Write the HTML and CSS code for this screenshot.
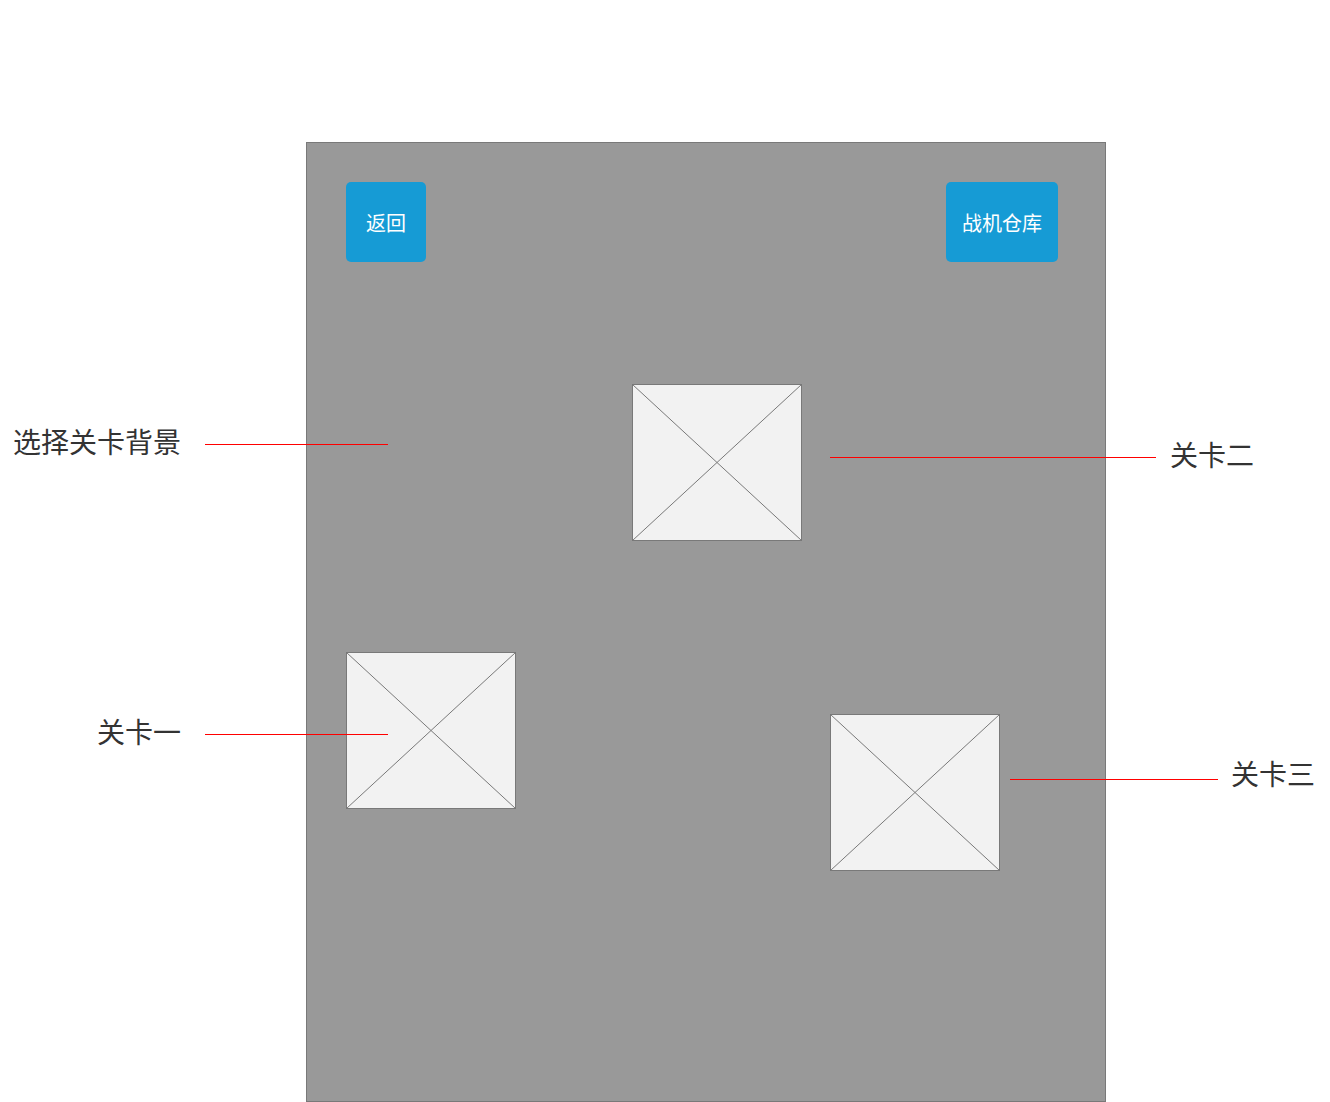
FILE: index.html
```html
<!DOCTYPE html>
<html lang="zh-CN">
<head>
<meta charset="utf-8">
<meta name="viewport" content="width=device-width, initial-scale=1">
<title>选择关卡</title>
<link rel="stylesheet" href="styles.css">
</head>
<body>
<main class="page">
  <section class="board">
    <nav class="toolbar">
      <button class="button" type="button">返回</button>
      <button class="button button-wide" type="button">战机仓库</button>
    </nav>

    <svg class="level level-one" viewBox="0 0 170 157" role="img" aria-label="关卡一">
      <rect class="level-box" x="0.5" y="0.5" width="169" height="156"/>
      <path class="level-cross" d="M0.5 0.5 169.5 156.5M0.5 156.5 169.5 0.5"/>
    </svg>
    <svg class="level level-two" viewBox="0 0 170 157" role="img" aria-label="关卡二">
      <rect class="level-box" x="0.5" y="0.5" width="169" height="156"/>
      <path class="level-cross" d="M0.5 0.5 169.5 156.5M0.5 156.5 169.5 0.5"/>
    </svg>
    <svg class="level level-three" viewBox="0 0 170 157" role="img" aria-label="关卡三">
      <rect class="level-box" x="0.5" y="0.5" width="169" height="156"/>
      <path class="level-cross" d="M0.5 0.5 169.5 156.5M0.5 156.5 169.5 0.5"/>
    </svg>

    <p class="note note-background"><span class="label">选择关卡背景</span><i class="line"></i></p>
    <p class="note note-one"><span class="label">关卡一</span><i class="line"></i></p>
    <p class="note note-two"><i class="line line-long"></i><span class="label">关卡二</span></p>
    <p class="note note-three"><i class="line line-medium"></i><span class="label label-raised">关卡三</span></p>
  </section>
</main>
</body>
</html>
```
FILE: styles.css
```css
* {
  box-sizing: border-box;
}

body {
  margin: 0;
  background: #fff;
  color: #333;
  font-family: "Noto Sans CJK SC", sans-serif;
}

.page {
  display: flex;
  min-height: 100vh;
  padding: 142px 224px 0 306px;
}

.board {
  position: relative;
  flex: 1;
  min-height: 800px;
  border: 1px solid #797979;
  background: #999;
}

.toolbar {
  display: flex;
  justify-content: space-between;
  padding: 39px 47px 0 39px;
}

.button {
  width: 80px;
  height: 80px;
  padding: 2px 0 0;
  border: 0;
  border-radius: 5px;
  background: #169bd5;
  color: #fff;
  font-family: inherit;
  font-size: 20px;
  line-height: 24px;
}

.button-wide {
  width: 112px;
}

/* Level markers sit freely on the map */
.level {
  position: absolute;
  width: 170px;
  height: 157px;
}

.level-box {
  fill: #f2f2f2;
  stroke: #797979;
}

.level-cross {
  fill: none;
  stroke: #797979;
}

.level-one {
  left: 39px;
  top: 509px;
}

.level-two {
  left: 325px;
  top: 241px;
}

.level-three {
  left: 523px;
  top: 571px;
}

/* Callouts reach from the margins over the map */
.note {
  position: absolute;
  display: flex;
  align-items: center;
  gap: 24px;
  margin: 0;
  font-size: 28px;
  line-height: 32px;
  white-space: nowrap;
}

.label {
  padding-bottom: 6px;
}

.label-raised {
  padding-bottom: 12px;
}

.line {
  width: 183px;
  height: 1px;
  background: #f00;
}

.line-long {
  width: 326px;
}

.line-medium {
  width: 208px;
}

.note-background {
  left: -294px;
  top: 282px;
}

.note-one {
  left: -210px;
  top: 572px;
}

.note-two {
  left: 523px;
  top: 295px;
  gap: 14px;
}

.note-three {
  left: 703px;
  top: 614px;
  gap: 13px;
}
```
